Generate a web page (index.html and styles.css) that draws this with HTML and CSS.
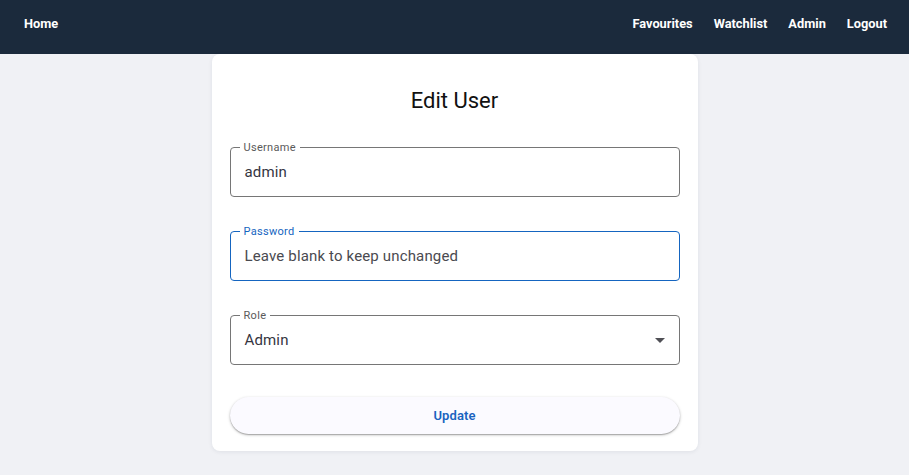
FILE: index.html
```html
<!DOCTYPE html>
<html lang="en">
<head>
<meta charset="utf-8">
<title>Edit User</title>
<link rel="stylesheet" href="styles.css">
</head>
<body>
<nav class="nav">
  <a class="nav-link" href="#">Home</a>
  <div class="nav-right">
    <a class="nav-link" href="#">Favourites</a>
    <a class="nav-link" href="#">Watchlist</a>
    <a class="nav-link" href="#">Admin</a>
    <a class="nav-link" href="#">Logout</a>
  </div>
</nav>
<main class="main">
  <section class="card">
    <h1 class="title">Edit User</h1>
    <form class="form">
      <div class="field">
        <span class="field-label">Username</span>
        <span class="field-value">admin</span>
      </div>
      <div class="field field-focus">
        <span class="field-label">Password</span>
        <span class="field-value field-placeholder">Leave blank to keep unchanged</span>
      </div>
      <div class="field">
        <span class="field-label">Role</span>
        <span class="field-value">Admin</span>
        <svg class="field-arrow" viewBox="0 0 24 24" width="24" height="24"><path d="M7 10l5 5 5-5z" fill="#4f4f55"/></svg>
      </div>
      <button type="button" class="btn">Update</button>
    </form>
  </section>
</main>
</body>
</html>
```

FILE: styles.css
```css
* { box-sizing: border-box; }
html, body { margin: 0; padding: 0; }
body {
  font-family: Roboto, "Noto Sans", Arial, sans-serif;
  background: #f0f1f5;
  width: 909px;
  height: 475px;
  overflow: hidden;
}
.nav {
  height: 54px;
  background: #1b2a3c;
  display: flex;
  justify-content: space-between;
  align-items: flex-start;
  padding: 15px 22px 0 24px;
}
.nav-right {
  display: flex;
  gap: 21px;
}
.nav-link {
  color: #ffffff;
  text-decoration: none;
  font-size: 12.8px;
  font-weight: 700;
  line-height: 18px;
}
.main {
  display: flex;
  justify-content: center;
}
.card {
  width: 486px;
  background: #ffffff;
  border-radius: 8px;
  box-shadow: 0 1px 4px rgba(30, 40, 70, 0.08);
  padding: 31px 18px 17px;
}
.title {
  margin: 0 0 30px;
  text-align: center;
  font-size: 22px;
  font-weight: 400;
  line-height: 32px;
  color: #111111;
}
.form {
  display: flex;
  flex-direction: column;
  gap: 34px;
}
.field {
  position: relative;
  height: 50px;
  border: 1px solid #767676;
  border-radius: 4px;
  display: flex;
  align-items: center;
  padding: 0 14px;
}
.field-focus {
  border-color: #1565c0;
}
.field-label {
  position: absolute;
  left: 9px;
  top: -7px;
  padding: 0 4px;
  background: #ffffff;
  font-size: 11px;
  letter-spacing: 0.3px;
  line-height: 14px;
  color: #5a5a5a;
}
.field-focus .field-label {
  color: #1565c0;
}
.field-value {
  font-size: 15px;
  letter-spacing: 0.15px;
  color: #35353f;
}
.field-placeholder {
  color: #4a4a50;
}
.field-arrow {
  position: absolute;
  right: 7px;
  top: 12px;
}
.btn {
  margin-top: -2px;
  height: 37px;
  border: none;
  border-radius: 19px;
  background: #fbfaff;
  box-shadow: 0 1px 3px rgba(0, 0, 0, 0.25), 0 1px 1px rgba(0, 0, 0, 0.2);
  font-family: Roboto, "Noto Sans", Arial, sans-serif;
  font-size: 13px;
  font-weight: 600;
  letter-spacing: 0.1px;
  color: #1a63c0;
  cursor: pointer;
}
```
